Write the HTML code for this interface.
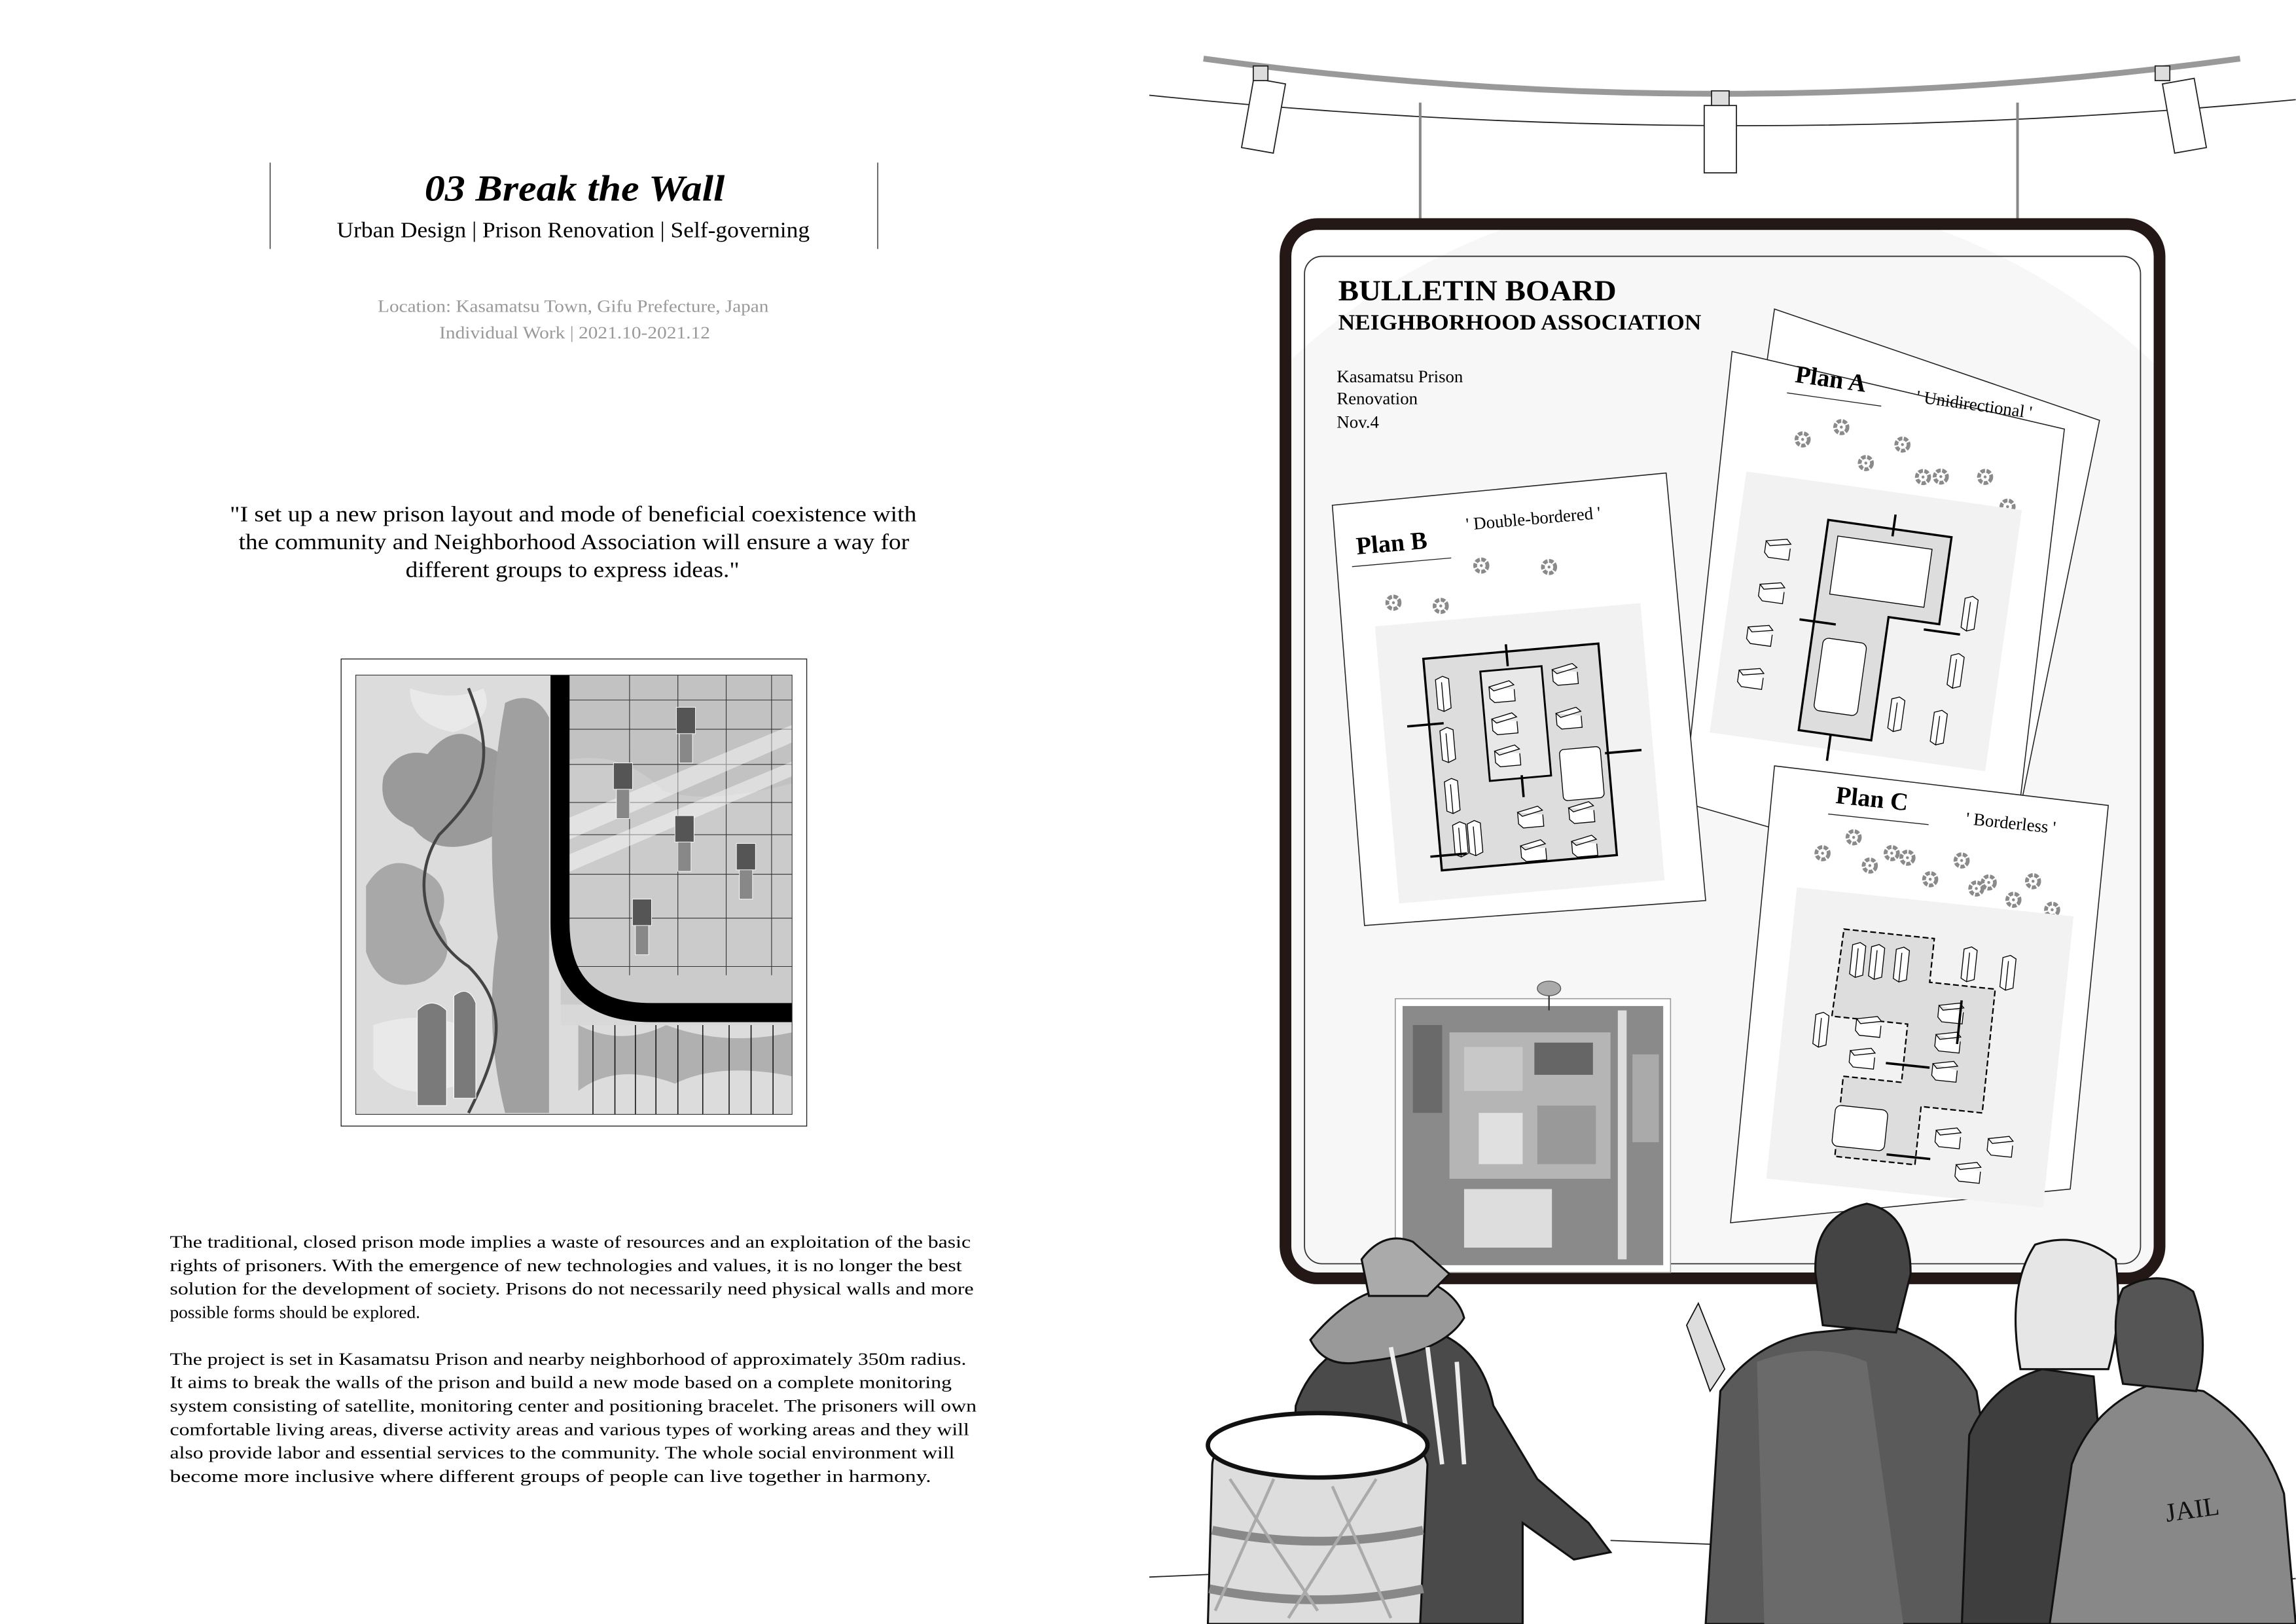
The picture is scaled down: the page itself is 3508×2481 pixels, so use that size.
<!DOCTYPE html>
<html><head><meta charset="utf-8"><style>
html,body{margin:0;padding:0;background:#fff;}
svg{display:block;}
text{font-family:"Liberation Serif",serif;}
</style></head><body>
<svg width="3508" height="2481" viewBox="0 0 1568.2 1109" xmlns="http://www.w3.org/2000/svg">
<defs>
<clipPath id="ci"><rect x="243" y="461" width="298" height="300"/></clipPath>
<clipPath id="cb"><rect x="878" y="153" width="597" height="720" rx="22"/></clipPath>
<g id="fl"><circle r="4.2" fill="none" stroke="#8a8a8a" stroke-width="2.6" stroke-dasharray="3 1"/><circle r="1" fill="#8a8a8a"/></g>
<g id="bx"><path d="M0,0 l14,-3 l3,3 l-14,3z M0,0 v8 l3,3 h14 v-8" fill="#fff" stroke="#000" stroke-width=".6"/></g>
<g id="bv"><path d="M0,0 l5,-2 l4,2 v20 l-5,2 l-4,-2z M4,2 v20" fill="#fff" stroke="#000" stroke-width=".6"/></g>
</defs>
<rect width="1568.2" height="1109" fill="#fff"/>

<!-- LEFT PAGE -->
<line x1="184.5" y1="111" x2="184.5" y2="170" stroke="#444" stroke-width=".7"/>
<line x1="599.5" y1="111" x2="599.5" y2="170" stroke="#444" stroke-width=".7"/>
<text x="290" y="137" font-size="25" font-weight="bold" font-style="italic" textLength="205" lengthAdjust="spacingAndGlyphs">03   Break the Wall</text>
<text x="230" y="162" font-size="15" textLength="323" lengthAdjust="spacingAndGlyphs">Urban Design | Prison Renovation | Self-governing</text>
<text x="258" y="213" font-size="12" fill="#999" textLength="267" lengthAdjust="spacingAndGlyphs">Location: Kasamatsu Town, Gifu Prefecture, Japan</text>
<text x="300" y="231" font-size="12" fill="#999" textLength="185" lengthAdjust="spacingAndGlyphs">Individual Work | 2021.10-2021.12</text>

<g font-size="15">
<text x="157" y="356" textLength="469" lengthAdjust="spacingAndGlyphs">"I set up a new prison layout and mode of beneficial coexistence with</text>
<text x="163" y="375" textLength="458" lengthAdjust="spacingAndGlyphs">the community and Neighborhood Association will ensure a way for</text>
<text x="277" y="394" textLength="228" lengthAdjust="spacingAndGlyphs">different groups to express ideas."</text>
</g>

<!-- collage image -->
<rect x="233" y="450" width="318" height="319" fill="#fff" stroke="#222" stroke-width=".6"/>
<g clip-path="url(#ci)">
<rect x="243" y="461" width="298" height="300" fill="#d8d8d8"/>
<rect x="243" y="461" width="140" height="300" fill="#dcdcdc"/>
<path d="M262,530 q10,-20 30,-15 q20,-25 40,-5 q20,5 15,30 q10,25 -20,35 q-30,10 -45,-10 q-25,-10 -20,-35z" fill="#9a9a9a"/>
<path d="M250,605 q15,-25 40,-10 q20,10 10,35 q15,25 -10,40 q-30,10 -40,-20z" fill="#a8a8a8"/>
<path d="M345,480 q20,-10 30,10 v270 h-30 q-15,-60 -5,-120 q-10,-80 5,-160z" fill="#a0a0a0"/>
<path d="M255,700 q30,-10 60,0 q20,20 0,40 q-40,15 -60,-10z" fill="#eee" opacity=".7"/>
<path d="M280,470 q30,10 50,0 q10,20 -20,30 q-30,-5 -30,-30z" fill="#eee" opacity=".7"/>
<path d="M320,470 C340,520 330,540 300,570 C280,600 290,640 320,660 C350,690 340,720 320,760" stroke="#444" stroke-width="2" fill="none"/>
<path d="M285,690 q10,-10 20,0 v65 h-20z M310,680 q10,-8 15,5 v65 h-15z" fill="#7a7a7a" stroke="#fff" stroke-width=".5"/>
<rect x="383" y="461" width="158" height="225" fill="#cbcbcb"/>
<path d="M383,520 q40,-10 70,20 q30,10 88,-5 v-74 h-158z" fill="#c2c2c2"/>
<path d="M430,461 v205 M463,461 v205 M496,461 v205 M527,461 v205 M383,478 h158 M383,498 h158 M383,522 h158 M383,548 h158 M383,570 h158 M383,597 h158 M383,627 h158 M383,660 h158" stroke="#333" stroke-width=".5" fill="none"/>
<path d="M385,560 L541,495 v12 L385,575z M385,585 L541,520 v10 L385,597z" fill="#fff" opacity=".45"/>
<g fill="#555" stroke="#fff" stroke-width=".4">
<rect x="462" y="483" width="13" height="18"/><rect x="464" y="501" width="9" height="20" fill="#888"/>
<rect x="419" y="521" width="13" height="18"/><rect x="421" y="539" width="9" height="20" fill="#888"/>
<rect x="461" y="557" width="13" height="18"/><rect x="463" y="575" width="9" height="20" fill="#888"/>
<rect x="503" y="576" width="13" height="18"/><rect x="505" y="594" width="9" height="20" fill="#888"/>
<rect x="432" y="614" width="13" height="18"/><rect x="434" y="632" width="9" height="20" fill="#888"/>
</g>
<rect x="383" y="700" width="158" height="61" fill="#dcdcdc"/>
<path d="M395,700 q30,15 60,0 q40,15 86,5 v30 q-50,-10 -80,5 q-40,-15 -66,5z" fill="#b0b0b0"/>
<path d="M405,700 v61 M420,700 v61 M434,700 v61 M448,700 v61 M463,700 v61 M480,700 v61 M498,700 v61 M513,700 v61 M528,700 v61" stroke="#111" stroke-width=".7"/>
<path d="M382.5,461 L382.5,630 Q382.5,691.5 445,691.5 L541,691.5" stroke="#000" stroke-width="13" fill="none"/>
</g>
<rect x="243" y="461" width="298" height="300" fill="none" stroke="#333" stroke-width=".5"/>

<g font-size="12">
<text x="116" y="852" textLength="547" lengthAdjust="spacingAndGlyphs">The traditional, closed prison mode implies a waste of resources and an exploitation of the basic</text>
<text x="116" y="868" textLength="541" lengthAdjust="spacingAndGlyphs">rights of prisoners. With the emergence of new technologies and values, it is no longer the best</text>
<text x="116" y="884" textLength="549" lengthAdjust="spacingAndGlyphs">solution for the development of society. Prisons do not necessarily need physical walls and more</text>
<text x="116" y="900" textLength="171" lengthAdjust="spacingAndGlyphs">possible forms should be explored.</text>
<text x="116" y="932" textLength="544" lengthAdjust="spacingAndGlyphs">The project is set in Kasamatsu Prison and nearby neighborhood of approximately 350m radius.</text>
<text x="116" y="948" textLength="534" lengthAdjust="spacingAndGlyphs">It aims to break the walls of the prison and build a new mode based on a complete monitoring</text>
<text x="116" y="964" textLength="551" lengthAdjust="spacingAndGlyphs">system consisting of satellite, monitoring center and positioning bracelet. The prisoners will own</text>
<text x="116" y="980" textLength="546" lengthAdjust="spacingAndGlyphs">comfortable living areas, diverse activity areas and various types of working areas and they will</text>
<text x="116" y="996" textLength="536" lengthAdjust="spacingAndGlyphs">also provide labor and essential services to the community. The whole social environment will</text>
<text x="116" y="1012" textLength="520" lengthAdjust="spacingAndGlyphs">become more inclusive where different groups of people can live together in harmony.</text>
</g>

<!-- RIGHT PAGE: lights -->
<path d="M785,65 Q1175,105 1568,68" stroke="#222" stroke-width=".8" fill="none"/>
<path d="M822,40 Q1175,88 1530,40" stroke="#999" stroke-width="4" fill="none"/>
<g stroke="#222" stroke-width=".8" fill="#fff">
<rect x="852" y="55" width="22" height="48" transform="rotate(10 863 79)"/>
<rect x="856" y="45" width="10" height="10" fill="#ddd"/>
<rect x="1164" y="72" width="22" height="46"/>
<rect x="1169" y="62" width="12" height="10" fill="#ddd"/>
<rect x="1481" y="55" width="22" height="48" transform="rotate(-10 1492 79)"/>
<rect x="1472" y="45" width="10" height="10" fill="#ddd"/>
</g>
<path d="M970,70 V150 M1378,70 V150" stroke="#888" stroke-width="1.8"/>

<!-- board -->
<g clip-path="url(#cb)"><circle cx="1175" cy="560" r="430" fill="#f7f7f7"/></g>
<rect x="878" y="153" width="597" height="720" rx="22" fill="none" stroke="#231815" stroke-width="8"/>
<rect x="891" y="175" width="571" height="688" rx="12" fill="none" stroke="#333" stroke-width=".8"/>
<text x="914" y="205" font-size="20" font-weight="bold" textLength="190" lengthAdjust="spacingAndGlyphs">BULLETIN BOARD</text>
<text x="914" y="225" font-size="15" font-weight="bold" textLength="248" lengthAdjust="spacingAndGlyphs">NEIGHBORHOOD ASSOCIATION</text>
<g font-size="12"><text x="913" y="261">Kasamatsu Prison</text><text x="913" y="276">Renovation</text><text x="913" y="292">Nov.4</text></g>

<!-- papers -->
<polygon points="1212,211 1434,287 1370,600 1165,540" fill="#fff" stroke="#222" stroke-width=".7"/>
<polygon points="1183,240 1410,293 1372,612 1150,548" fill="#fff" stroke="#222" stroke-width=".7"/>
<g transform="rotate(8 1280 420)">
<text x="1204" y="270" font-size="17" font-weight="bold">Plan A</text>
<line x1="1200" y1="278" x2="1265" y2="278" stroke="#222" stroke-width=".6"/>
<text x="1288" y="272" font-size="12">' Unidirectional '</text>
<use href="#fl" x="1215" y="308"/><use href="#fl" x="1240" y="296"/><use href="#fl" x="1260" y="318"/><use href="#fl" x="1283" y="302"/><use href="#fl" x="1300" y="322"/><use href="#fl" x="1312" y="320"/><use href="#fl" x="1342" y="316"/><use href="#fl" x="1360" y="334"/>
<rect x="1180" y="335" width="190" height="180" fill="#f2f2f2"/>
<path d="M1240,360 h85 v60 h-35 v85 h-50z" fill="#ddd" stroke="#000" stroke-width="1.5"/>
<rect x="1248" y="370" width="65" height="40" fill="#fff" stroke="#000" stroke-width=".6"/>
<rect x="1248" y="440" width="30" height="50" rx="4" fill="#fff" stroke="#000" stroke-width=".6"/>
<use href="#bx" x="1200" y="380"/><use href="#bx" x="1200" y="410"/><use href="#bx" x="1196" y="440"/><use href="#bx" x="1194" y="470"/>
<use href="#bv" x="1340" y="400"/><use href="#bv" x="1336" y="440"/><use href="#bv" x="1300" y="475"/><use href="#bv" x="1330" y="480"/>
<path d="M1285,365 v-15 M1255,430 h-25 M1315,425 h25 M1262,505 v18" stroke="#000" stroke-width="1.6"/>
</g>
<polygon points="910,345 1138,323 1165,615 932,632" fill="#fff" stroke="#222" stroke-width=".7"/>
<g transform="rotate(-5 1030 480)">
<text x="936" y="370" font-size="17" font-weight="bold">Plan B</text>
<line x1="932" y1="378" x2="1000" y2="378" stroke="#222" stroke-width=".6"/>
<text x="1012" y="360" font-size="12">' Double-bordered '</text>
<use href="#fl" x="958" y="405"/><use href="#fl" x="990" y="410"/><use href="#fl" x="1020" y="385"/><use href="#fl" x="1066" y="390"/>
<rect x="944" y="420" width="182" height="190" fill="#f2f2f2"/>
<rect x="975" y="445" width="120" height="145" fill="#ddd" stroke="#000" stroke-width="1.5"/>
<rect x="1013" y="457" width="42" height="75" fill="#e8e8e8" stroke="#000" stroke-width="1.3"/>
<rect x="1062" y="515" width="28" height="35" rx="3" fill="#fff" stroke="#000" stroke-width=".6"/>
<use href="#bv" x="982" y="460"/><use href="#bv" x="982" y="495"/><use href="#bv" x="982" y="530"/><use href="#bv" x="985" y="560"/><use href="#bv" x="995" y="560"/>
<use href="#bx" x="1062" y="460"/><use href="#bx" x="1062" y="490"/><use href="#bx" x="1030" y="555"/><use href="#bx" x="1065" y="555"/><use href="#bx" x="1030" y="578"/><use href="#bx" x="1065" y="578"/>
<use href="#bx" x="1018" y="468"/><use href="#bx" x="1018" y="490"/><use href="#bx" x="1018" y="512"/>
<path d="M1032,455 v-15 M960,490 h25 M1118,520 h-25 M1035,530 v15 M968,580 h25" stroke="#000" stroke-width="1.6"/>
</g>
<polygon points="1212,523 1440,550 1414,812 1182,835" fill="#fff" stroke="#222" stroke-width=".7"/>
<g transform="rotate(6 1310 680)">
<text x="1240" y="555" font-size="17" font-weight="bold">Plan C</text>
<line x1="1236" y1="563" x2="1305" y2="563" stroke="#222" stroke-width=".6"/>
<text x="1330" y="560" font-size="12">' Borderless '</text>
<use href="#fl" x="1235" y="590"/><use href="#fl" x="1255" y="577"/><use href="#fl" x="1268" y="595"/><use href="#fl" x="1282" y="585"/><use href="#fl" x="1293" y="587"/><use href="#fl" x="1310" y="600"/><use href="#fl" x="1330" y="585"/><use href="#fl" x="1342" y="603"/><use href="#fl" x="1350" y="598"/><use href="#fl" x="1368" y="608"/><use href="#fl" x="1380" y="594"/><use href="#fl" x="1395" y="612"/>
<rect x="1220" y="615" width="190" height="200" fill="#f2f2f2"/>
<path d="M1255,640 h62 v30 h45 v85 h-42 v40 h-55 v-55 h40 v-40 h-52z" fill="#ddd" stroke="#000" stroke-width="1" stroke-dasharray="4 2"/>
<use href="#bv" x="1262" y="650"/><use href="#bv" x="1275" y="650"/><use href="#bv" x="1292" y="650"/><use href="#bv" x="1338" y="645"/><use href="#bv" x="1365" y="648"/><use href="#bv" x="1242" y="700"/>
<use href="#bx" x="1270" y="700"/><use href="#bx" x="1268" y="722"/><use href="#bx" x="1325" y="685"/><use href="#bx" x="1325" y="705"/><use href="#bx" x="1325" y="725"/><use href="#bx" x="1332" y="770"/><use href="#bx" x="1368" y="772"/><use href="#bx" x="1348" y="792"/>
<rect x="1262" y="760" width="36" height="28" rx="4" fill="#fff" stroke="#000" stroke-width=".6"/>
<path d="M1340,680 v30 M1293,728 h30 M1300,790 h30" stroke="#000" stroke-width="1.6"/>
</g>

<!-- aerial photo -->
<rect x="953" y="682" width="188" height="187" fill="#fff" stroke="#999" stroke-width=".7"/>
<rect x="958" y="687" width="178" height="177" fill="#8a8a8a"/>
<g fill="#c8c8c8">
<rect x="990" y="705" width="110" height="100" fill="#b5b5b5"/>
<rect x="1000" y="715" width="40" height="30"/><rect x="1048" y="712" width="40" height="22" fill="#666"/>
<rect x="1010" y="760" width="30" height="35" fill="#e0e0e0"/><rect x="1050" y="755" width="40" height="40" fill="#999"/>
<rect x="1000" y="812" width="60" height="40" fill="#ddd"/>
<rect x="1105" y="690" width="6" height="170" fill="#ddd"/>
<rect x="965" y="700" width="20" height="60" fill="#6a6a6a"/><rect x="1115" y="720" width="18" height="60" fill="#aaa"/>
</g>
<ellipse cx="1058" cy="675" rx="8" ry="5" fill="#aaa" stroke="#555" stroke-width=".6"/>
<line x1="1058" y1="680" x2="1058" y2="690" stroke="#333" stroke-width="1"/>

<!-- floor lines -->
<path d="M785,1077 L830,1075 M1100,1052 L1180,1055 M1540,1080 L1568,1078" stroke="#222" stroke-width=".8"/>

<!-- people -->
<g stroke="#111" stroke-width="1.4">
<path d="M880,1109 L885,960 Q900,915 960,905 Q1010,910 1020,960 L1050,1010 L1085,1040 L1100,1060 L1075,1065 L1040,1040 L1040,1109z" fill="#4a4a4a"/>
<path d="M895,915 Q920,885 945,880 L962,870 Q995,880 1000,900 Q985,925 930,930 Q905,935 895,915z" fill="#999"/>
<path d="M930,860 Q945,840 965,848 L990,870 L975,885 L935,885z" fill="#aaa"/>
<path d="M950,920 L965,1000 M975,920 L985,1000 M995,930 L1000,1000" stroke="#eee" stroke-width="3"/>
<path d="M828,1000 Q830,975 900,970 Q970,975 975,1000 L970,1109 L825,1109z" fill="#ddd"/>
<ellipse cx="900" cy="987" rx="75" ry="22" fill="#fff" stroke-width="3"/>
<path d="M828,1045 Q900,1060 972,1045 M826,1085 Q900,1100 972,1085" stroke="#888" stroke-width="6" fill="none"/>
<path d="M840,1010 L900,1100 M870,1010 L830,1100 M910,1015 L950,1105 M940,1010 L880,1105" stroke="#aaa" stroke-width="2" fill="none"/>
<path d="M1165,1109 L1175,950 Q1200,915 1240,910 L1290,905 Q1335,920 1350,950 L1375,1109z" fill="#5a5a5a"/>
<path d="M1200,930 Q1240,915 1275,930 L1300,1109 L1205,1109z" fill="#6a6a6a" stroke="none"/>
<path d="M1245,905 L1240,870 Q1238,830 1275,822 Q1305,828 1305,870 L1295,910z" fill="#444"/>
<path d="M1152,905 L1160,890 L1178,935 L1168,950z" fill="#ddd" stroke-width=".8"/>
<path d="M1340,1109 L1345,980 Q1360,945 1395,935 L1430,940 L1445,1109z" fill="#3e3e3e"/>
<path d="M1380,935 Q1370,880 1390,850 Q1420,840 1445,860 Q1450,900 1440,935z" fill="#e6e6e6"/>
<path d="M1400,1109 L1415,1000 Q1430,960 1470,945 L1505,950 Q1545,975 1560,1020 L1568,1109z" fill="#888"/>
<path d="M1450,945 Q1440,900 1450,880 Q1475,865 1498,882 Q1510,915 1500,950z" fill="#555"/>
</g>
<text x="1478" y="1037" font-size="18" font-family="Liberation Sans Narrow, Liberation Sans, sans-serif" transform="rotate(-8 1495 1025)" fill="#111">JAIL</text>
</svg>
</body></html>
